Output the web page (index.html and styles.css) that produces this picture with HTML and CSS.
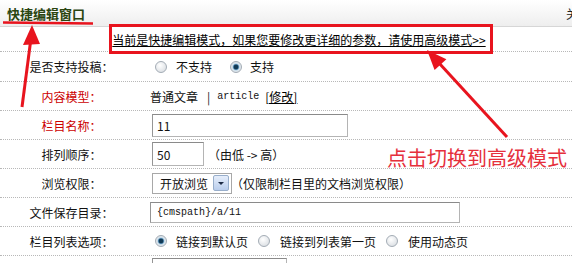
FILE: index.html
```html
<!DOCTYPE html>
<html lang="zh-CN">
  <head>
    <meta charset="UTF-8" />
    <title>快捷编辑窗口</title>
    <link rel="stylesheet" href="styles.css">
  </head>
  <body>
    <div class="page">
      <!-- Window title bar -->
      <div class="head">
        <span class="head-title">快捷编辑窗口</span>
        <a class="head-close" href="#">关闭</a>
      </div>

      <!-- Switch to advanced mode -->
      <div class="tip-row">
        <a href="#">当前是快捷编辑模式，如果您要修改更详细的参数，请使用高级模式&gt;&gt;</a>
      </div>

      <div class="row row-first">
        <div class="label">是否支持投稿：</div>
        <div class="field">
          <label class="opt"><input type="radio" name="issend" />不支持</label>
          <label class="opt opt-wide"><input type="radio" name="issend" checked />支持</label>
        </div>
      </div>

      <div class="row">
        <div class="label req">内容模型：</div>
        <div class="field">
          普通文章<span class="sep">|</span><span class="mono">article</span><a class="edit" href="#">[修改]</a>
        </div>
      </div>

      <div class="row">
        <div class="label req">栏目名称：</div>
        <div class="field">
          <input class="text text-name" type="text" value="11" />
        </div>
      </div>

      <div class="row">
        <div class="label">排列顺序：</div>
        <div class="field">
          <input class="text text-sort" type="text" value="50" />
          <span class="hint">（由低 -&gt; 高）</span>
        </div>
      </div>

      <div class="row">
        <div class="label">浏览权限：</div>
        <div class="field">
          <span class="select">开放浏览<span class="select-btn"></span></span>
          <span class="hint-tight">（仅限制栏目里的文档浏览权限）</span>
        </div>
      </div>

      <div class="row">
        <div class="label">文件保存目录：</div>
        <div class="field">
          <input class="text text-path mono" type="text" value="{cmspath}/a/11" />
        </div>
      </div>

      <div class="row">
        <div class="label">栏目列表选项：</div>
        <div class="field">
          <label class="opt"><input type="radio" name="isdefault" checked />链接到默认页</label>
          <label class="opt opt-near"><input type="radio" name="isdefault" />链接到列表第一页</label>
          <label class="opt opt-near"><input type="radio" name="isdefault" />使用动态页</label>
        </div>
      </div>

      <div class="row row-more">
        <div class="label"></div>
        <div class="field">
          <input class="text text-more" type="text" value="" />
        </div>
      </div>

      <!-- Red annotations drawn over the page -->
      <svg class="marks" width="598" height="263" viewBox="0 0 598 263">
        <path d="M3 22.5 L93 23.5" stroke="#e8141e" stroke-width="2.5" fill="none" />
        <rect x="110.5" y="25.5" width="381" height="27" stroke="#e8141e" stroke-width="3" fill="none" />
        <path d="M22 107 L30.5 42" stroke="#e8141e" stroke-width="3" fill="none" />
        <polygon points="32,25 23,45 40,44" fill="#e8141e" />
        <path d="M507 137 L439 63" stroke="#e8141e" stroke-width="3" fill="none" />
        <polygon points="427,50 446.4,59.3 434.6,70.1" fill="#e8141e" />
      </svg>
      <span class="note">点击切换到高级模式</span>
    </div>
  </body>
</html>
```

FILE: styles.css
```css
/* Page base */
body {
  margin: 0;
  background-color: #fff;
  overflow: hidden;
  font-family: "Noto Sans CJK SC", sans-serif;
  font-size: 12px;
  color: #111;
}

.page {
  position: relative;
  width: 598px;
}

/* Title bar */
.head {
  height: 26px;
  display: flex;
  align-items: center;
  justify-content: space-between;
  padding: 0 8px 0 7px;
  background: linear-gradient(#ffffff, #eeeeee);
  border-bottom: 1px solid #d6d6d6;
}

.head-title {
  font-size: 13px;
  font-weight: bold;
  color: #2a4510;
}

.head-close {
  color: #222;
  text-decoration: none;
}

/* Advanced mode link */
.tip-row {
  height: 24px;
  display: flex;
  align-items: center;
  justify-content: center;
  border-bottom: 1px dotted #b8b8b8;
}

.tip-row a {
  color: #000;
}

/* Form rows */
.row {
  height: 28px;
  display: flex;
  align-items: center;
  border-bottom: 1px dotted #b8b8b8;
}

.row-first {
  height: 29px;
}

.row-more {
  align-items: flex-start;
}

.label {
  width: 143px;
  flex: none;
  text-align: center;
}

.label.req {
  color: #cc0000;
}

.field {
  padding-left: 7px;
  display: flex;
  align-items: center;
  color: #111;
}

.mono {
  font-family: "Liberation Mono", monospace;
  font-size: 10px;
}

.sep {
  margin: 0 7px 0 9px;
  color: #222;
}

.edit {
  margin-left: 6px;
  color: #000;
}

/* Radio buttons, old Windows look */
.opt {
  display: inline-flex;
  align-items: center;
}

.opt input {
  appearance: none;
  width: 12px;
  height: 12px;
  margin: 0 9px 0 5px;
  border: 1px solid #a3acb5;
  border-radius: 50%;
  background: radial-gradient(circle at 40% 35%, #ffffff, #d3d8dd);
}

.opt input:checked {
  background: radial-gradient(circle, #123a55 0 2px, #4f86ad 2.6px, #cfe0ec 3.6px, #e4e8ec 5px);
}

.opt-wide input {
  margin-left: 18px;
  margin-right: 8px;
}

.opt-near input {
  margin-left: 10px;
  margin-right: 10px;
}

/* Text inputs */
.text {
  box-sizing: border-box;
  margin: 0 0 0 2px;
  padding: 0 4px;
  border: 1px solid #b4b4b4;
  border-top-color: #8a8a8a;
  border-left-color: #959595;
  font-family: "Noto Sans CJK SC", sans-serif;
  font-size: 12px;
  color: #111;
}

.text-name {
  width: 196px;
  height: 23px;
}

.text-sort {
  width: 52px;
  height: 24px;
}

.text-path {
  width: 310px;
  height: 21px;
  margin-left: 0;
  padding-left: 6px;
  font-family: "Liberation Mono", monospace;
  font-size: 10px;
}

.text-more {
  width: 135px;
  height: 24px;
  margin-top: 2px;
}

.hint {
  margin-left: 4px;
}

.hint-tight {
  margin-left: -1px;
}

/* Fake select box */
.select {
  box-sizing: border-box;
  width: 80px;
  height: 21px;
  margin-left: 2px;
  padding: 0 2px 0 7px;
  display: flex;
  align-items: center;
  justify-content: space-between;
  border: 1px solid #a8a8a8;
}

.select-btn {
  position: relative;
  width: 16px;
  height: 16px;
  border: 1px solid #98aecb;
  border-radius: 2px;
  background: linear-gradient(#e6eefb, #b9cdec);
  box-sizing: border-box;
}

.select-btn::after {
  content: "";
  position: absolute;
  left: 4px;
  top: 6px;
  border-left: 3px solid transparent;
  border-right: 3px solid transparent;
  border-top: 3px solid #1c2a44;
}

/* Annotations on top */
.marks {
  position: absolute;
  top: 0;
  left: 0;
  pointer-events: none;
}

.note {
  position: absolute;
  left: 387px;
  top: 147px;
  font-size: 20px;
  line-height: 22px;
  color: #e5303c;
  white-space: nowrap;
}
```
